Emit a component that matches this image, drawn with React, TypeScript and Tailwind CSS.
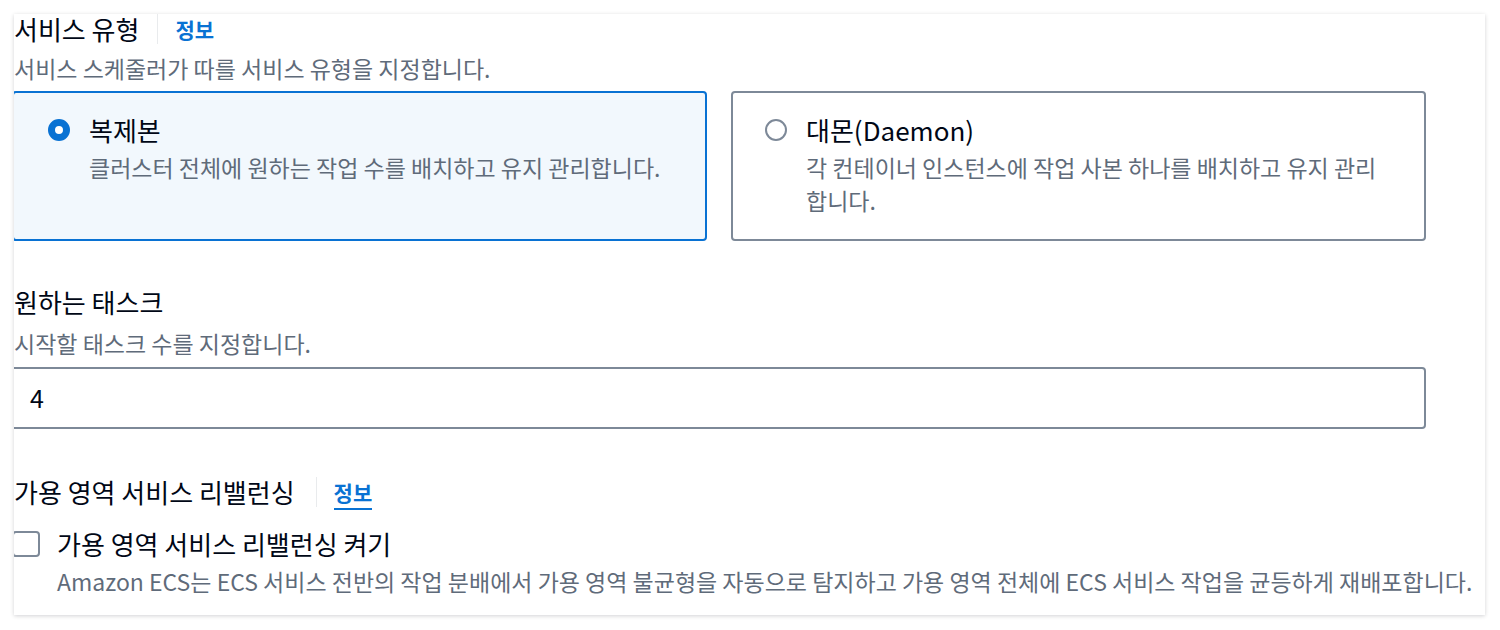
export default function App() {
  return (
    <div className="h-[630px] w-[1500px] bg-white pt-[14px] pl-[14px] font-['Noto_Sans_CJK_KR',sans-serif] text-[#000716]">
      <div className="h-[601px] w-[1471px] overflow-x-clip bg-white shadow-[0_1px_4px_rgba(0,7,22,0.18)] pb-[19px]">
        {/* 서비스 유형 */}
        <div className="flex h-[30px] items-stretch">
          <span className="text-[26px] leading-[30px]">서비스 유형</span>
          <span className="ml-[18px] mr-[17px] w-px bg-[#e9ebed]"></span>
          <span className="text-[21px] font-bold leading-[30px] text-[#0972d3]">정보</span>
        </div>
        <p className="mt-[9px] text-[23px] leading-[30px] text-[#5f6b7a]">서비스 스케줄러가 따를 서비스 유형을 지정합니다.</p>

        <div className="-ml-[2px] mt-[8px] grid w-[1414px] grid-cols-2 gap-6">
          <div className="h-[150px] rounded-[4px] border-2 border-[#0972d3] bg-[#f2f8fd] pl-[34px] pt-[22px]">
            <div className="flex gap-[19px]">
              <div className="mt-[4px] h-[22px] w-[22px] shrink-0 rounded-full border-[7px] border-[#0972d3] bg-white"></div>
              <div>
                <div className="text-[26px] leading-[30px]">복제본</div>
                <div className="mt-[6px] text-[23px] leading-[33px] text-[#5f6b7a]">클러스터 전체에 원하는 작업 수를 배치하고 유지 관리합니다.</div>
              </div>
            </div>
          </div>
          <div className="h-[150px] rounded-[4px] border-2 border-[#7d8998] bg-white pl-[32px] pr-[40px] pt-[22px]">
            <div className="flex gap-[19px]">
              <div className="mt-[4px] h-[22px] w-[22px] shrink-0 rounded-full border-2 border-[#7d8998] bg-white"></div>
              <div>
                <div className="text-[26px] leading-[30px]">대몬(Daemon)</div>
                <div className="mt-[6px] text-[23px] leading-[33px] text-[#5f6b7a]">각 컨테이너 인스턴스에 작업 사본 하나를 배치하고 유지 관리합니다.</div>
              </div>
            </div>
          </div>
        </div>

        {/* 원하는 태스크 */}
        <div className="mt-[46px] text-[26px] leading-[30px]">원하는 태스크</div>
        <p className="mt-[11px] text-[23px] leading-[30px] text-[#5f6b7a]">시작할 태스크 수를 지정합니다.</p>
        <div className="-ml-[4px] mt-[9px] flex h-[62px] w-[1416px] items-center rounded-[4px] border-2 border-[#7d8998] bg-white pl-[18px] text-[25px]">
          4
        </div>

        {/* 가용 영역 서비스 리밸런싱 */}
        <div className="mt-[48px] flex h-[30px] items-stretch">
          <span className="text-[26px] leading-[30px]">가용 영역 서비스 리밸런싱</span>
          <span className="ml-[21px] mr-[17px] w-px bg-[#e9ebed]"></span>
          <span className="h-[33px] border-b-2 border-[#0972d3] text-[21px] font-bold leading-[30px] text-[#0972d3]">정보</span>
        </div>
        <div className="mt-[22px] flex items-center">
          <div className="-ml-[2px] h-[26px] w-[28px] shrink-0 rounded-[4px] border-2 border-[#7d8998] bg-white"></div>
          <span className="ml-[17px] text-[26px] leading-[30px]">가용 영역 서비스 리밸런싱 켜기</span>
        </div>
        <p className="ml-[43px] mt-[7px] whitespace-nowrap text-[23px] leading-[30px] text-[#5f6b7a]">
          Amazon ECS는 ECS 서비스 전반의 작업 분배에서 가용 영역 불균형을 자동으로 탐지하고 가용 영역 전체에 ECS 서비스 작업을 균등하게 재배포합니다.
        </p>
      </div>
    </div>
  );
}
